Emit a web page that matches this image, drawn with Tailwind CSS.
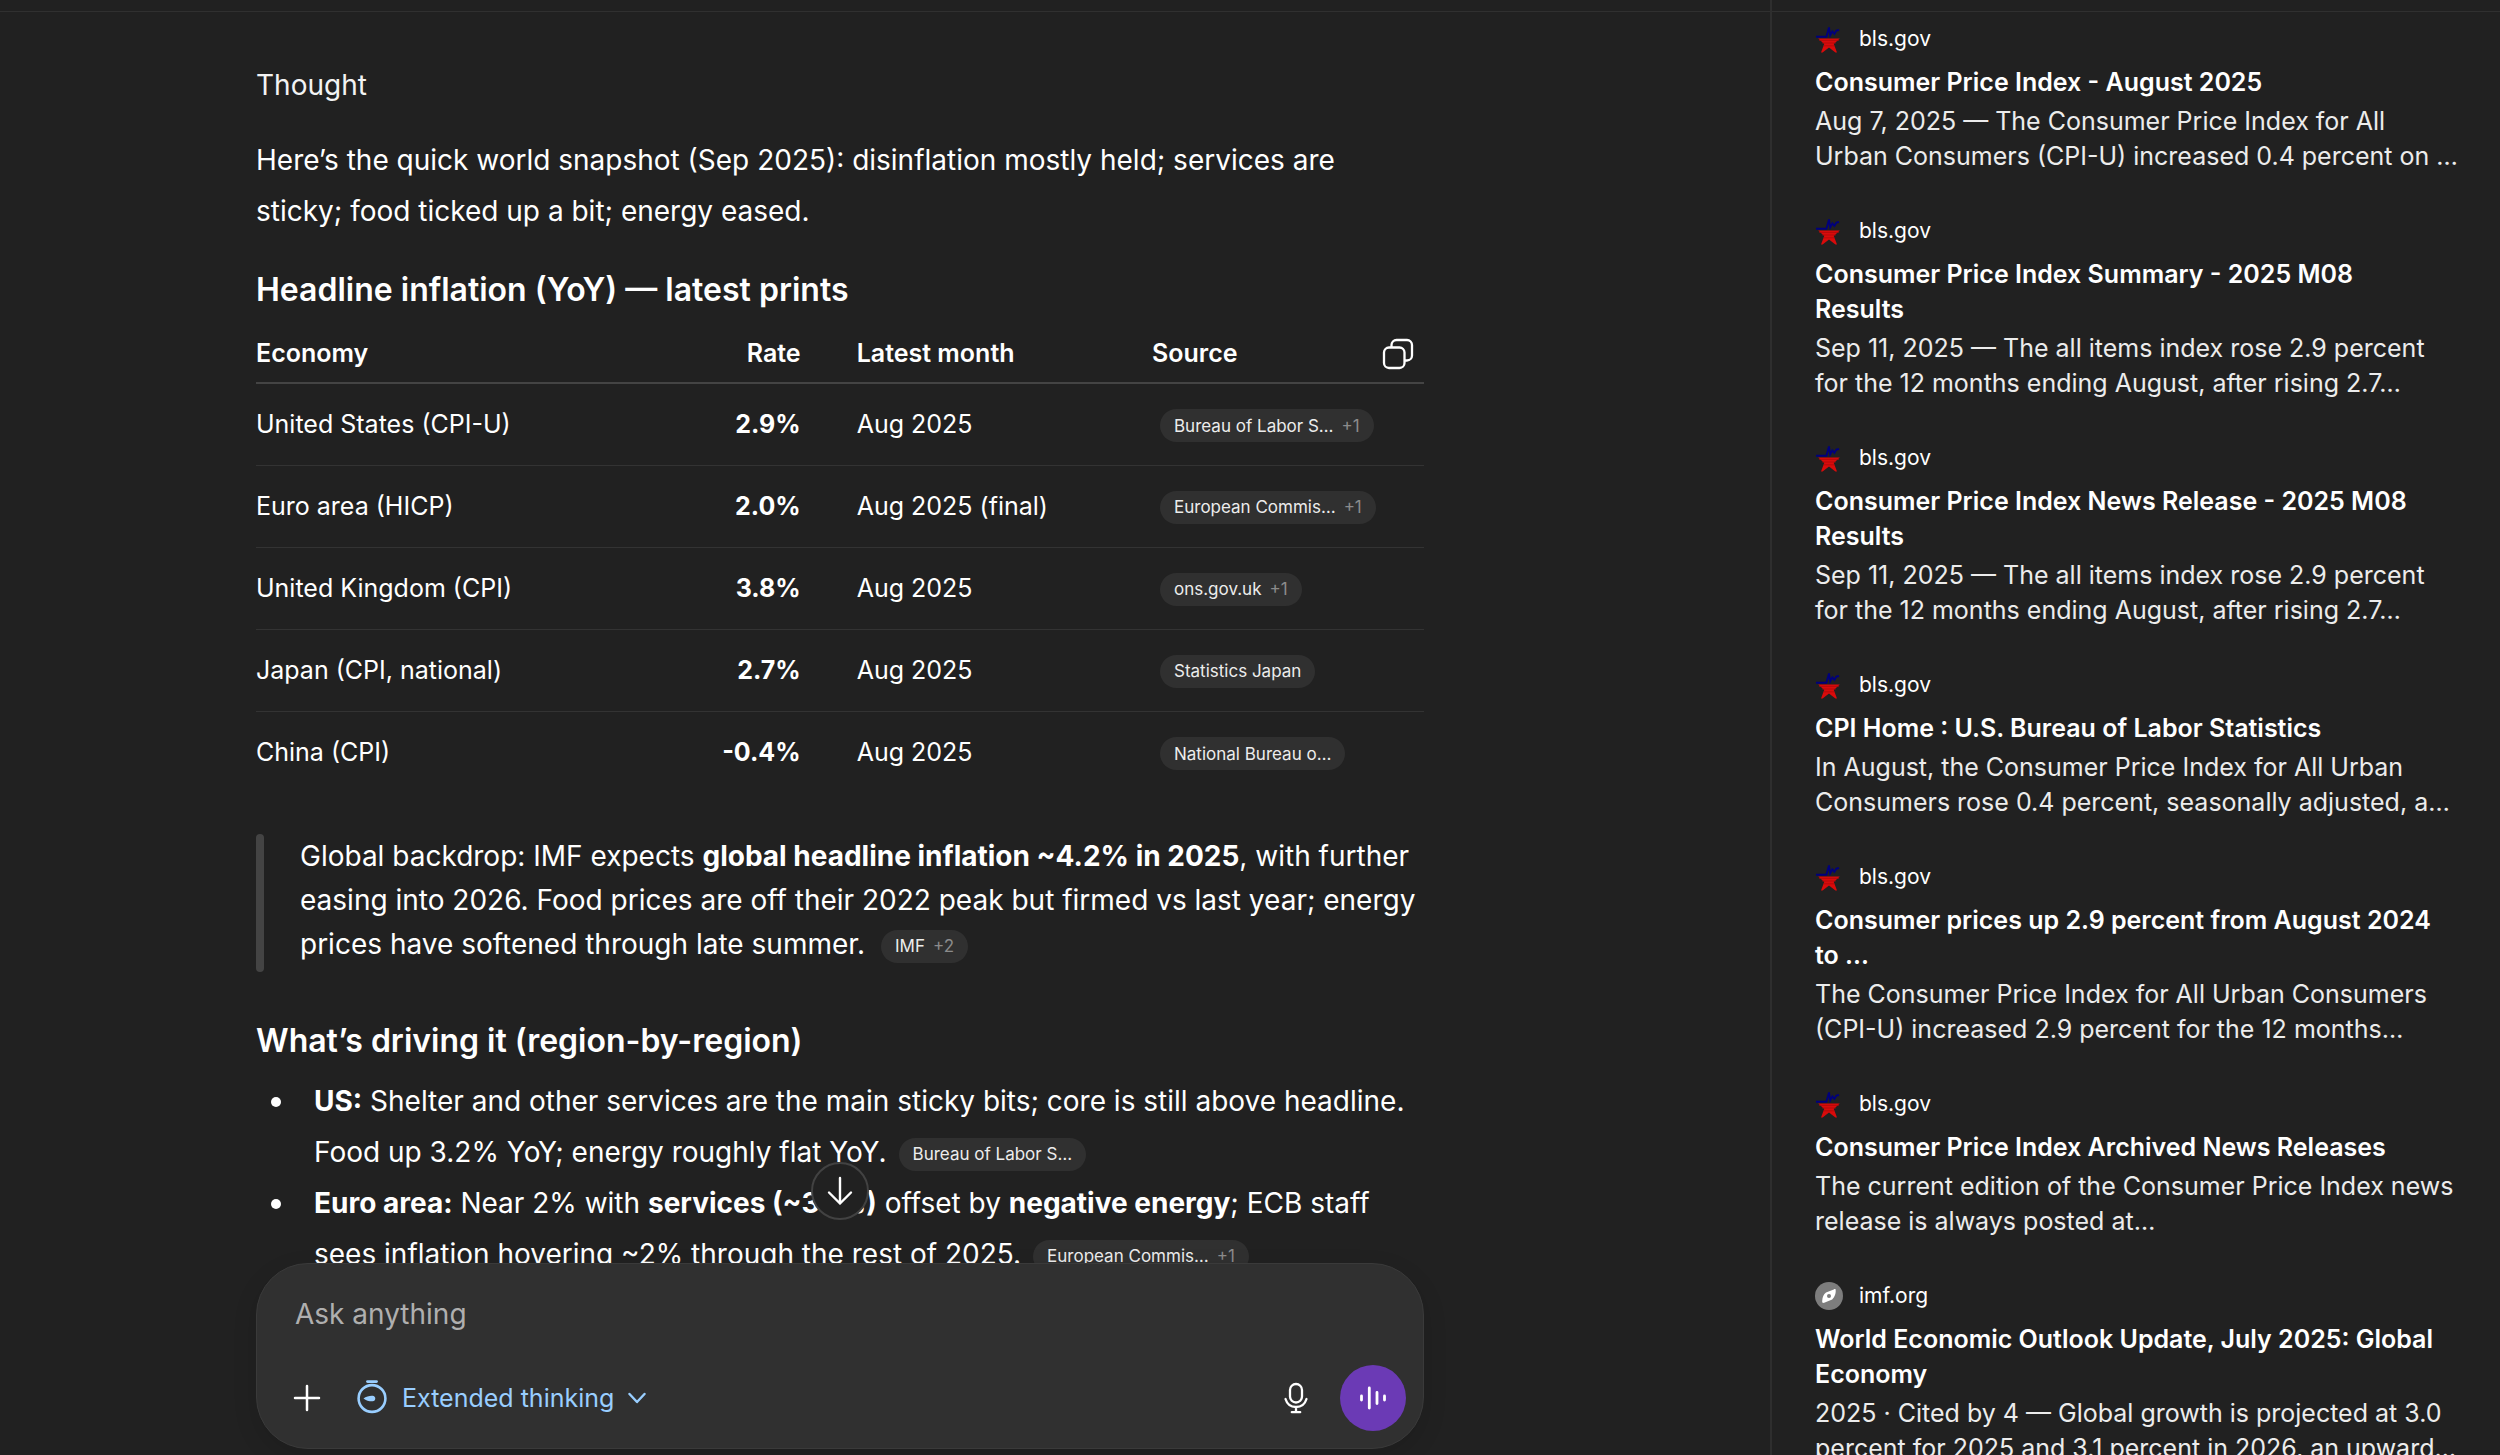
<!DOCTYPE html>
<html lang="en">
  <head>
    <meta charset="UTF-8" />
    <meta name="viewport" content="width=device-width, initial-scale=1.0" />
    <title>World inflation snapshot</title>
    <script src="https://cdn.jsdelivr.net/npm/@tailwindcss/browser@4"></script>
  </head>
  <body class="bg-[#212121] text-white font-['Inter',sans-serif]">
    <!-- shared favicons -->
    <svg class="hidden" aria-hidden="true">
      <symbol id="icon-bls" viewBox="0 0 28 28">
        <path d="M1 11.8 H11.4 L14 2.4 L15.2 10.4 L17.4 6.4 L19.4 8.8 L21.4 5.6 L24 5" fill="none" stroke="#00007c" stroke-width="1.9" />
        <path d="M3.2 13.4 H24.8 L18.8 19 L22 27.4 H20.4 L14 22.6 L7.6 27.4 H6 L9.2 19 Z" fill="#d90b0b" />
        <path d="M4 15.4 H24 M7 18 H21 M8.6 20.8 H19.4" stroke="#a80808" stroke-width="0.7" />
      </symbol>
      <symbol id="icon-compass" viewBox="0 0 28 28">
        <circle cx="14" cy="14" r="14" fill="#7d7d7d" />
        <path d="M20.6 7.6 C21.2 11.4 19.6 15.4 17.2 17.4 L9.2 20.8 C7.6 21.2 7 20.4 7.2 19 C7.4 15.6 8.6 12 11 10.6 L18.8 7.4 C19.8 7 20.5 7 20.6 7.6 Z" fill="#fff" />
        <circle cx="14" cy="14" r="2" fill="#7d7d7d" />
      </symbol>
    </svg>

    <div class="flex h-screen overflow-hidden">
      <main class="relative flex-1 min-w-0 overflow-hidden">
        <div class="h-3 border-b border-[#303030]"></div>

        <div class="pl-64 pr-[346px] pt-12 text-[28px] leading-[51px]">
          <button type="button" class="block text-[#f3f3f3]">Thought</button>
          <p class="mt-6">
            Here’s the quick world snapshot (Sep 2025): disinflation mostly held; services are
            <br />sticky; food ticked up a bit; energy eased.
          </p>

          <h2 class="mt-[33px] text-[32px] leading-10 font-semibold">Headline inflation (YoY) — latest prints</h2>

          <table class="mt-[13px] w-full table-fixed border-collapse text-left text-[25px] leading-[35px]">
            <colgroup>
              <col class="w-[36%]" />
              <col />
              <col class="w-[27%]" />
              <col class="w-[308px]" />
            </colgroup>
            <thead>
              <tr class="border-b-2 border-[#444444]">
                <th class="pt-[13px] pb-[11px] font-semibold">Economy</th>
                <th class="pt-[13px] pb-[11px] font-semibold text-right">Rate</th>
                <th class="pt-[13px] pb-[11px] pl-14 font-semibold">Latest month</th>
                <th class="pt-[13px] pb-[11px] pl-9 font-semibold">
                  <div class="flex items-center justify-between pr-[10px]">
                    Source
                    <button type="button" aria-label="Copy table">
                      <svg class="w-8 h-8" viewBox="0 0 32 32" fill="none" stroke="currentColor" stroke-width="2.3">
                        <rect x="2" y="9.5" width="20.5" height="20.5" rx="5" />
                        <path d="M9.5 9 V7 A5 5 0 0 1 14.5 2 H25 A5 5 0 0 1 30 7 V17.5 A5 5 0 0 1 25 22.5 H23" />
                      </svg>
                    </button>
                  </div>
                </th>
              </tr>
            </thead>
            <tbody>
              <tr class="h-[82px] border-b border-[#333333]">
                <td>United States (CPI-U)</td>
                <td class="text-right font-bold">2.9%</td>
                <td class="pl-14">Aug 2025</td>
                <td class="pl-11"><a href="#" class="inline-flex h-[33px] items-center gap-2 rounded-full bg-[#303030] px-[14px] align-middle text-[17px] leading-5 text-[#ececec]">Bureau of Labor S… <span class="text-[#8b8b8b]">+1</span></a></td>
              </tr>
              <tr class="h-[82px] border-b border-[#333333]">
                <td>Euro area (HICP)</td>
                <td class="text-right font-bold">2.0%</td>
                <td class="pl-14">Aug 2025 (final)</td>
                <td class="pl-11"><a href="#" class="inline-flex h-[33px] items-center gap-2 rounded-full bg-[#303030] px-[14px] align-middle text-[17px] leading-5 text-[#ececec]">European Commis… <span class="text-[#8b8b8b]">+1</span></a></td>
              </tr>
              <tr class="h-[82px] border-b border-[#333333]">
                <td>United Kingdom (CPI)</td>
                <td class="text-right font-bold">3.8%</td>
                <td class="pl-14">Aug 2025</td>
                <td class="pl-11"><a href="#" class="inline-flex h-[33px] items-center gap-2 rounded-full bg-[#303030] px-[14px] align-middle text-[17px] leading-5 text-[#ececec]">ons.gov.uk <span class="text-[#8b8b8b]">+1</span></a></td>
              </tr>
              <tr class="h-[82px] border-b border-[#333333]">
                <td>Japan (CPI, national)</td>
                <td class="text-right font-bold">2.7%</td>
                <td class="pl-14">Aug 2025</td>
                <td class="pl-11"><a href="#" class="inline-flex h-[33px] items-center gap-2 rounded-full bg-[#303030] px-[14px] align-middle text-[17px] leading-5 text-[#ececec]">Statistics Japan</a></td>
              </tr>
              <tr class="h-[82px]">
                <td>China (CPI)</td>
                <td class="text-right font-bold">-0.4%</td>
                <td class="pl-14">Aug 2025</td>
                <td class="pl-11"><a href="#" class="inline-flex h-[33px] items-center gap-2 rounded-full bg-[#303030] px-[14px] align-middle text-[17px] leading-5 text-[#ececec]">National Bureau o…</a></td>
              </tr>
            </tbody>
          </table>

          <div class="mt-[41px] flex gap-9">
            <div class="w-2 shrink-0 rounded-full bg-[#444444]"></div>
            <blockquote class="pb-[6px] leading-[44px] whitespace-nowrap">
              Global backdrop: IMF expects <strong class="font-bold">global headline inflation ~4.2% in 2025</strong>, with further
              <br />easing into 2026. Food prices are off their 2022 peak but firmed vs last year; energy
              <br />prices have softened through late summer.
              <a href="#" class="ml-2 inline-flex h-[33px] items-center gap-2 rounded-full bg-[#303030] px-[14px] align-middle text-[17px] leading-5 text-[#ececec]">IMF <span class="text-[#8b8b8b]">+2</span></a>
            </blockquote>
          </div>

          <h2 class="mt-[49px] text-[32px] leading-10 font-semibold">What’s driving it (region-by-region)</h2>
          <ul class="mt-[15px] whitespace-nowrap">
            <li class="flex">
              <span class="mt-[21px] ml-[15px] mr-[33px] h-[10px] w-[10px] shrink-0 rounded-full bg-white"></span>
              <div>
                <strong class="font-bold">US:</strong> Shelter and other services are the main sticky bits; core is still above headline.
                <br />Food up 3.2% YoY; energy roughly flat YoY.
                <a href="#" class="ml-1 inline-flex h-[33px] items-center gap-2 rounded-full bg-[#303030] px-[14px] align-middle text-[17px] leading-5 text-[#ececec]">Bureau of Labor S…</a>
              </div>
            </li>
            <li class="flex">
              <span class="mt-[21px] ml-[15px] mr-[33px] h-[10px] w-[10px] shrink-0 rounded-full bg-white"></span>
              <div>
                <strong class="font-bold">Euro area:</strong> Near 2% with <strong class="font-bold">services (~3.1%)</strong> offset by <strong class="font-bold">negative energy</strong>; ECB staff
                <br />sees inflation hovering ~2% through the rest of 2025.
                <a href="#" class="ml-1 inline-flex h-[33px] items-center gap-2 rounded-full bg-[#303030] px-[14px] align-middle text-[17px] leading-5 text-[#ececec]">European Commis… <span class="text-[#8b8b8b]">+1</span></a>
              </div>
            </li>
          </ul>
        </div>

        <!-- composer, pinned over the conversation -->
        <div class="absolute inset-x-0 bottom-0 pl-64 pr-[346px] pb-[6px]">
          <form class="relative rounded-[52px] border border-[#3a3a3a] bg-[#303030] pt-7 pb-[17px] pr-[17px] pl-[38px] shadow-[0_8px_24px_rgba(0,0,0,0.12)]">
            <button type="button" aria-label="Scroll to bottom" class="absolute bottom-full left-1/2 mb-11 flex h-[58px] w-[58px] -translate-x-1/2 items-center justify-center rounded-full border-2 border-[#424242] bg-[#212121]">
              <svg class="w-8 h-8" viewBox="0 0 32 32" fill="none" stroke="currentColor" stroke-width="2.4" stroke-linecap="round" stroke-linejoin="round">
                <path d="M16 3 V28.5 M5 17.5 L16 28.5 L27 17.5" />
              </svg>
            </button>
            <label for="prompt" class="sr-only">Ask anything</label>
            <input id="prompt" type="text" placeholder="Ask anything" class="block w-full bg-transparent text-[28px] leading-[44px] placeholder:text-[#afafaf] focus:outline-none" />
            <div class="mt-[29px] flex h-[66px] items-center">
              <button type="button" aria-label="Add files">
                <svg class="w-6 h-[26px]" viewBox="0 0 24 26" overflow="visible" fill="none" stroke="currentColor" stroke-width="2.5" stroke-linecap="round">
                  <path d="M12 1 V25 M0 13 H24" />
                </svg>
              </button>
              <button type="button" class="ml-[37px] flex items-center text-[25px] leading-[35px] text-[#99ceff]">
                <svg class="w-8 h-9" viewBox="0 0 32 36" fill="none" stroke="currentColor" stroke-width="2.6">
                  <circle cx="16" cy="18.5" r="13.4" />
                  <path d="M11.5 1.6 H20.5" stroke-width="2.8" stroke-linecap="round" />
                  <path d="M7.5 18.5 C10 16.3 14 15.5 16.6 15.7 C20.2 15.9 20.2 21.1 16.6 21.3 C14 21.5 10 20.7 7.5 18.5 Z" fill="currentColor" stroke="none" />
                </svg>
                <span class="ml-[14px]">Extended thinking</span>
                <svg class="ml-[14px] w-[18px] h-3" viewBox="0 0 18 12" fill="none" stroke="currentColor" stroke-width="2.4" stroke-linecap="round" stroke-linejoin="round">
                  <path d="M1.5 2 L9 10 L16.5 2" />
                </svg>
              </button>
              <button type="button" aria-label="Dictate" class="ml-auto">
                <svg class="w-6 h-8" viewBox="0 0 24 32" fill="none" stroke="currentColor" stroke-width="2.3" stroke-linecap="round">
                  <rect x="6" y="2" width="12" height="18.5" rx="6" />
                  <path d="M1.5 17 C3 22 7 25 12 25 C17 25 21 22 22.5 17 M12 25 V30 M7.8 30.2 H16.2" />
                </svg>
              </button>
              <button type="button" aria-label="Voice mode" class="ml-8 flex h-[66px] w-[66px] items-center justify-center rounded-full bg-[#6b3ab5]">
                <svg class="w-7 h-6" viewBox="0 0 28 24" fill="none" stroke="currentColor" stroke-width="2.8" stroke-linecap="round">
                  <path d="M2.5 10 V14 M10.3 2 V22 M18 6.5 V17.5 M25.5 10 V14" />
                </svg>
              </button>
            </div>
          </form>
        </div>
      </main>

      <aside class="w-[730px] shrink-0 overflow-hidden border-l-2 border-[#2e2e2e] text-[25px] leading-[35px] whitespace-nowrap">
        <div class="h-3 border-b border-[#303030]"></div>
        <div class="flex flex-col gap-[42px] pl-[43px] pt-3">
          <a href="#" class="block">
            <span class="mb-3 flex h-[29px] items-center gap-4 text-[21px]"><svg class="w-7 h-7"><use href="#icon-bls" /></svg>bls.gov</span>
            <h3 class="font-semibold">Consumer Price Index - August 2025</h3>
            <p class="mt-1 text-[#ececec]">Aug 7, 2025 — The Consumer Price Index for All<br />Urban Consumers (CPI-U) increased 0.4 percent on …</p>
          </a>
          <a href="#" class="block">
            <span class="mb-3 flex h-[29px] items-center gap-4 text-[21px]"><svg class="w-7 h-7"><use href="#icon-bls" /></svg>bls.gov</span>
            <h3 class="font-semibold">Consumer Price Index Summary - 2025 M08<br />Results</h3>
            <p class="mt-1 text-[#ececec]">Sep 11, 2025 — The all items index rose 2.9 percent<br />for the 12 months ending August, after rising 2.7…</p>
          </a>
          <a href="#" class="block">
            <span class="mb-3 flex h-[29px] items-center gap-4 text-[21px]"><svg class="w-7 h-7"><use href="#icon-bls" /></svg>bls.gov</span>
            <h3 class="font-semibold">Consumer Price Index News Release - 2025 M08<br />Results</h3>
            <p class="mt-1 text-[#ececec]">Sep 11, 2025 — The all items index rose 2.9 percent<br />for the 12 months ending August, after rising 2.7…</p>
          </a>
          <a href="#" class="block">
            <span class="mb-3 flex h-[29px] items-center gap-4 text-[21px]"><svg class="w-7 h-7"><use href="#icon-bls" /></svg>bls.gov</span>
            <h3 class="font-semibold">CPI Home : U.S. Bureau of Labor Statistics</h3>
            <p class="mt-1 text-[#ececec]">In August, the Consumer Price Index for All Urban<br />Consumers rose 0.4 percent, seasonally adjusted, a…</p>
          </a>
          <a href="#" class="block">
            <span class="mb-3 flex h-[29px] items-center gap-4 text-[21px]"><svg class="w-7 h-7"><use href="#icon-bls" /></svg>bls.gov</span>
            <h3 class="font-semibold">Consumer prices up 2.9 percent from August 2024<br />to ...</h3>
            <p class="mt-1 text-[#ececec]">The Consumer Price Index for All Urban Consumers<br />(CPI-U) increased 2.9 percent for the 12 months…</p>
          </a>
          <a href="#" class="block">
            <span class="mb-3 flex h-[29px] items-center gap-4 text-[21px]"><svg class="w-7 h-7"><use href="#icon-bls" /></svg>bls.gov</span>
            <h3 class="font-semibold">Consumer Price Index Archived News Releases</h3>
            <p class="mt-1 text-[#ececec]">The current edition of the Consumer Price Index news<br />release is always posted at…</p>
          </a>
          <a href="#" class="block">
            <span class="mb-3 flex h-[29px] items-center gap-4 text-[21px]"><svg class="w-7 h-7"><use href="#icon-compass" /></svg>imf.org</span>
            <h3 class="font-semibold">World Economic Outlook Update, July 2025: Global<br />Economy</h3>
            <p class="mt-1 text-[#ececec]">2025 · Cited by 4 — Global growth is projected at 3.0<br />percent for 2025 and 3.1 percent in 2026, an upward…</p>
          </a>
        </div>
      </aside>
    </div>
  </body>
</html>
